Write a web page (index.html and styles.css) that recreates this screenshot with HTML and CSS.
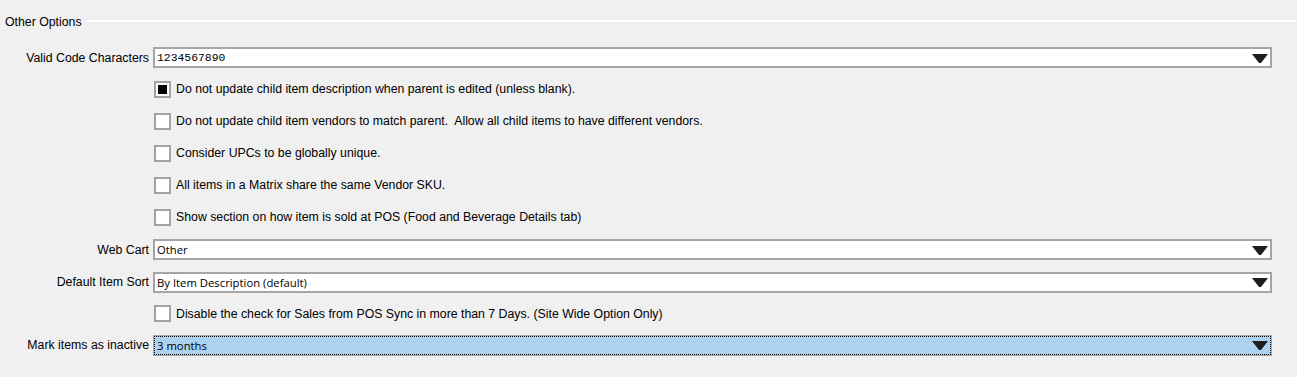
FILE: index.html
```html
<!DOCTYPE html>
<html lang="en">
<head>
    <meta charset="UTF-8">
    <title>Other Options</title>
    <link rel="stylesheet" href="styles.css">
</head>
<body>
    <div class="group">
        <div class="group-title">
            <span>Other Options</span>
            <div class="rule"></div>
        </div>

        <div class="form">
            <label class="label">Valid Code Characters</label>
            <div class="combo">
                <span class="value mono">1234567890</span>
                <svg class="arrow" width="16" height="9" viewBox="0 0 16 9"><polygon points="0,0 16,0 9,9 7,9" fill="#1e1e1e"/></svg>
            </div>

            <div></div>
            <div class="check"><span class="box checked"></span>Do not update child item description when parent is edited (unless blank).</div>

            <div></div>
            <div class="check"><span class="box"></span>Do not update child item vendors to match parent.&nbsp; Allow all child items to have different vendors.</div>

            <div></div>
            <div class="check"><span class="box"></span>Consider UPCs to be globally unique.</div>

            <div></div>
            <div class="check"><span class="box"></span>All items in a Matrix share the same Vendor SKU.</div>

            <div></div>
            <div class="check"><span class="box"></span>Show section on how item is sold at POS (Food and Beverage Details tab)</div>

            <label class="label">Web Cart</label>
            <div class="combo">
                <span class="value">Other</span>
                <svg class="arrow" width="16" height="9" viewBox="0 0 16 9"><polygon points="0,0 16,0 9,9 7,9" fill="#1e1e1e"/></svg>
            </div>

            <label class="label">Default Item Sort</label>
            <div class="combo">
                <span class="value">By Item Description (default)</span>
                <svg class="arrow" width="16" height="9" viewBox="0 0 16 9"><polygon points="0,0 16,0 9,9 7,9" fill="#1e1e1e"/></svg>
            </div>

            <div></div>
            <div class="check"><span class="box"></span>Disable the check for Sales from POS Sync in more than 7 Days. (Site Wide Option Only)</div>

            <label class="label">Mark items as inactive</label>
            <div class="combo focused">
                <div class="focus-ring">
                    <span class="value">3 months</span>
                    <svg class="arrow" width="16" height="9" viewBox="0 0 16 9"><polygon points="0,0 16,0 9,9 7,9" fill="#1e1e1e"/></svg>
                </div>
            </div>
        </div>
    </div>
</body>
</html>
```

FILE: styles.css
```css
body {
    margin: 0;
    background-color: #f0f0f0;
    font-family: "Liberation Sans", Arial, sans-serif;
    font-size: 12.3px;
    color: #000000;
}
.group {
    padding: 14px 1px 0 5px;
}
.group-title {
    display: flex;
    align-items: center;
    height: 16px;
    gap: 5px;
}
.rule {
    flex: 1;
    height: 2px;
    background: #ffffff;
    margin-top: -2px;
}
.form {
    display: grid;
    grid-template-columns: 144px 1119px;
    grid-template-rows: 31px repeat(5, 32px) 33px 32px 31px 32px;
    column-gap: 4px;
    margin-top: 12px;
    align-items: center;
}
.label {
    text-align: right;
    white-space: nowrap;
}
.combo {
    height: 21px;
    box-sizing: border-box;
    border: 2px solid #a5a5a5;
    background: #ffffff;
    display: flex;
    align-items: center;
    padding: 0 2px 0 2px;
}
.value {
    flex: 1;
    font-family: "Open Sans", "DejaVu Sans", sans-serif;
    font-size: 11.3px;
    color: #000000;
}
.mono {
    font-family: "Liberation Mono", monospace;
    font-size: 11.4px;
}
.arrow {
    flex: none;
    margin-top: 1px;
}
.check {
    display: flex;
    align-items: center;
    padding-left: 1px;
    white-space: nowrap;
}
.box {
    width: 17px;
    height: 17px;
    box-sizing: border-box;
    border: 2px solid #a3a3a3;
    background: #ffffff;
    margin-right: 5px;
    display: flex;
    align-items: center;
    justify-content: center;
}
.box.checked::after {
    content: "";
    width: 9px;
    height: 9px;
    background: #000000;
}
.combo.focused {
    border-width: 1px;
    padding: 0;
    background: #acd2f2;
}
.focus-ring {
    flex: 1;
    height: 100%;
    box-sizing: border-box;
    border: 1px dotted #000000;
    display: flex;
    align-items: center;
    padding: 0 2px;
}
```
